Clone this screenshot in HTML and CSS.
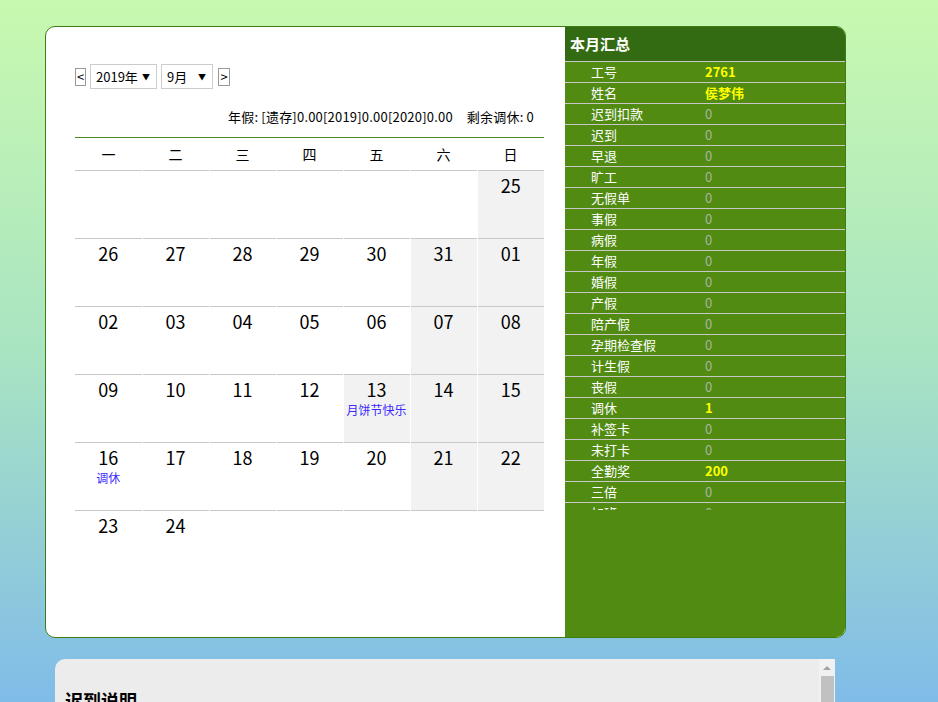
FILE: index.html
```html
<!DOCTYPE html>
<html lang="zh-CN">
<head>
<meta charset="utf-8">
<title>考勤日历</title>
<link rel="stylesheet" href="styles.css">
</head>
<body>
<div class="page">
  <div class="card">
    <div class="cal-panel">
      <div class="nav">
        <span class="nav-btn">&lt;</span>
        <span class="sel sel-year">2019年<span class="arrow">▼</span></span>
        <span class="sel sel-month">9月<span class="arrow">▼</span></span>
        <span class="nav-btn nav-next">&gt;</span>
      </div>
      <div class="info">年假: [遗存]0.00[2019]0.00[2020]0.00<span class="gap"></span>剩余调休: 0</div>
      <table class="cal">
        <thead>
          <tr><th>一</th><th>二</th><th>三</th><th>四</th><th>五</th><th>六</th><th>日</th></tr>
        </thead>
        <tbody>
          <tr><td></td><td></td><td></td><td></td><td></td><td></td><td class="off"><div class="d">25</div></td></tr>
          <tr><td><div class="d">26</div></td><td><div class="d">27</div></td><td><div class="d">28</div></td><td><div class="d">29</div></td><td><div class="d">30</div></td><td class="off"><div class="d">31</div></td><td class="off"><div class="d">01</div></td></tr>
          <tr><td><div class="d">02</div></td><td><div class="d">03</div></td><td><div class="d">04</div></td><td><div class="d">05</div></td><td><div class="d">06</div></td><td class="off"><div class="d">07</div></td><td class="off"><div class="d">08</div></td></tr>
          <tr><td><div class="d">09</div></td><td><div class="d">10</div></td><td><div class="d">11</div></td><td><div class="d">12</div></td><td class="off"><div class="d">13</div><div class="note">月饼节快乐</div></td><td class="off"><div class="d">14</div></td><td class="off"><div class="d">15</div></td></tr>
          <tr><td><div class="d">16</div><div class="note">调休</div></td><td><div class="d">17</div></td><td><div class="d">18</div></td><td><div class="d">19</div></td><td><div class="d">20</div></td><td class="off"><div class="d">21</div></td><td class="off"><div class="d">22</div></td></tr>
          <tr class="last"><td><div class="d">23</div></td><td><div class="d">24</div></td><td></td><td></td><td></td><td></td><td></td></tr>
        </tbody>
      </table>
    </div>
    <div class="side">
      <div class="side-title">本月汇总</div>
      <div class="side-list">
        <div class="row"><span class="lbl">工号</span><span class="val hi">2761</span></div>
        <div class="row"><span class="lbl">姓名</span><span class="val hi">侯梦伟</span></div>
        <div class="row"><span class="lbl">迟到扣款</span><span class="val">0</span></div>
        <div class="row"><span class="lbl">迟到</span><span class="val">0</span></div>
        <div class="row"><span class="lbl">早退</span><span class="val">0</span></div>
        <div class="row"><span class="lbl">旷工</span><span class="val">0</span></div>
        <div class="row"><span class="lbl">无假单</span><span class="val">0</span></div>
        <div class="row"><span class="lbl">事假</span><span class="val">0</span></div>
        <div class="row"><span class="lbl">病假</span><span class="val">0</span></div>
        <div class="row"><span class="lbl">年假</span><span class="val">0</span></div>
        <div class="row"><span class="lbl">婚假</span><span class="val">0</span></div>
        <div class="row"><span class="lbl">产假</span><span class="val">0</span></div>
        <div class="row"><span class="lbl">陪产假</span><span class="val">0</span></div>
        <div class="row"><span class="lbl">孕期检查假</span><span class="val">0</span></div>
        <div class="row"><span class="lbl">计生假</span><span class="val">0</span></div>
        <div class="row"><span class="lbl">丧假</span><span class="val">0</span></div>
        <div class="row"><span class="lbl">调休</span><span class="val hi">1</span></div>
        <div class="row"><span class="lbl">补签卡</span><span class="val">0</span></div>
        <div class="row"><span class="lbl">未打卡</span><span class="val">0</span></div>
        <div class="row"><span class="lbl">全勤奖</span><span class="val hi">200</span></div>
        <div class="row"><span class="lbl">三倍</span><span class="val">0</span></div>
        <div class="row"><span class="lbl">加班</span><span class="val">0</span></div>
      </div>
    </div>
  </div>
  <div class="notes">
    <div class="notes-body">
      <h3 class="notes-title">迟到说明</h3>
      <p class="notes-text">每月迟到次数及扣款规则说明。</p>
    </div>
    <div class="vscroll">
      <span class="vs-up"></span>
      <span class="vs-thumb"></span>
    </div>
  </div>
</div>
</body>
</html>
```
FILE: styles.css
```css
html, body {
  margin: 0;
  height: 100%;
  overflow: hidden;
}
body {
  background: linear-gradient(to bottom, #c8f9b0 0%, #a9e4c2 50%, #80bce8 100%);
  font-family: "Noto Sans CJK SC", "Noto Sans", sans-serif;
  color: #000;
}
.page {
  padding: 26px 0 0 45px;
  width: 801px;
}
.card {
  display: flex;
  height: 612px;
  box-sizing: border-box;
  border: 1px solid #3e7d12;
  border-radius: 10px;
  overflow: hidden;
  background: #fff;
}
.cal-panel {
  width: 519px;
  box-sizing: border-box;
  padding: 37px 21px 0 29px;
}
.nav {
  display: flex;
  align-items: center;
  height: 25px;
  font-size: 13px;
}
.nav-btn {
  box-sizing: border-box;
  width: 11px;
  height: 18px;
  border: 1px solid #999;
  display: flex;
  align-items: center;
  justify-content: center;
  font-size: 13px;
  line-height: 1;
}
.sel {
  box-sizing: border-box;
  height: 25px;
  border: 1px solid #ccc;
  display: flex;
  align-items: center;
  padding-left: 5px;
  position: relative;
}
.sel-year { width: 67px; margin-left: 4px; }
.sel-month { width: 52px; margin-left: 4px; }
.nav-next { margin-left: 5px; width: 12px; }
.arrow {
  position: absolute;
  right: 6px;
  top: 7px;
  font-size: 8px;
  line-height: 10px;
}
.info {
  margin-top: 18px;
  height: 20px;
  line-height: 20px;
  text-align: right;
  font-size: 13px;
  letter-spacing: 0.2px;
  padding-right: 10px;
}
.gap {
  display: inline-block;
  width: 14px;
}
.cal {
  margin-top: 10px;
  width: 469px;
  border-collapse: collapse;
  table-layout: fixed;
}
.cal th {
  height: 32px;
  border-top: 1px solid #4d8a22;
  font-weight: normal;
  font-size: 14px;
  padding: 0;
  text-align: center;
}
.cal td {
  height: 67px;
  padding: 0;
  vertical-align: top;
  text-align: center;
  border-top: 1px solid #c8c8c8;
  border-right: 1px solid #fff;
}
.cal td:last-child { border-right: none; }
.cal td.off { background: #f2f2f2; }
.d {
  font-size: 18px;
  line-height: 24px;
  margin-top: 2px;
}
.note {
  font-size: 12px;
  line-height: 14px;
  margin-top: 2px;
  color: #3b2bff;
}
.side {
  flex: 1;
  background: #518b12;
  color: #fff;
}
.side-title {
  height: 34px;
  line-height: 34px;
  background: #336b13;
  font-size: 15px;
  font-weight: bold;
  padding-left: 5px;
}
.side-list {
  height: 449px;
  overflow: hidden;
}
.row {
  display: flex;
  height: 20px;
  line-height: 20px;
  border-top: 1px solid #c8c8c8;
  font-size: 13px;
}
.lbl {
  width: 114px;
  padding-left: 26px;
}
.val { color: #a9b5a0; }
.val.hi {
  color: #ffff00;
  font-weight: bold;
}
.notes {
  margin: 21px 0 0 10px;
  width: 780px;
  height: 300px;
  display: flex;
  background: #ececec;
  border-top-left-radius: 10px;
  overflow: hidden;
}
.notes-body {
  flex: 1;
  padding: 20px 10px;
}
.notes-title {
  margin: 8px 0 10px;
  font-size: 18px;
  font-weight: bold;
}
.notes-text {
  font-size: 13px;
  margin: 0;
}
.vscroll {
  width: 16px;
  background: #f1f1f1;
  display: flex;
  flex-direction: column;
  align-items: center;
}
.vs-up {
  margin-top: 7px;
  width: 0;
  height: 0;
  border-left: 4px solid transparent;
  border-right: 4px solid transparent;
  border-bottom: 4px solid #a3a3a3;
}
.vs-thumb {
  margin-top: 6px;
  width: 13px;
  height: 200px;
  background: #c1c1c1;
}
```
